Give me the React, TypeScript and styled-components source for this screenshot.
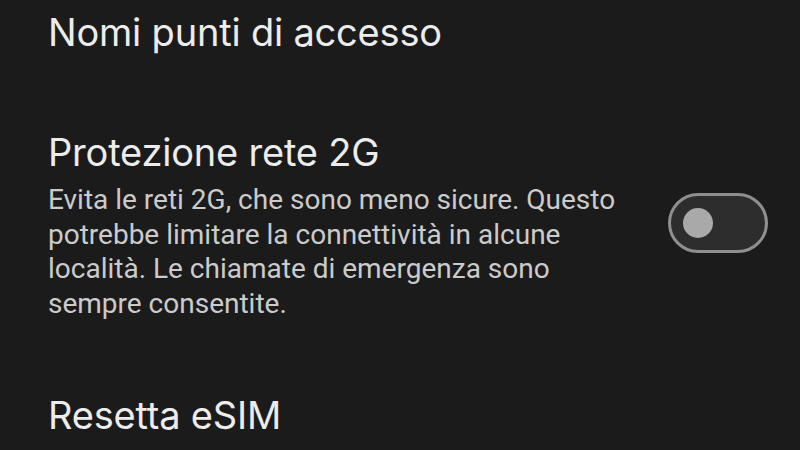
import React from 'react';
import styled, { createGlobalStyle } from 'styled-components';

const GlobalStyle = createGlobalStyle`
    html, body {
        margin: 0;
        padding: 0;
        background: #1b1b1b;
    }
`;

const Screen = styled.div`
    width: 800px;
    height: 450px;
    overflow: hidden;
    background: #1b1b1b;
    display: flex;
    flex-direction: column;
`;

const Item = styled.div<{ $pt: number }>`
    display: flex;
    align-items: center;
    gap: 40px;
    padding: ${props => props.$pt}px 32px 0 48px;
`;

const TextCol = styled.div`
    flex: 1;
    display: flex;
    flex-direction: column;
`;

const Title = styled.div`
    font-family: 'Inter', 'Open Sans', sans-serif;
    font-size: 38px;
    line-height: 48px;
    color: #ececec;
    letter-spacing: -0.2px;
`;

const Summary = styled.div`
    font-family: 'Roboto', sans-serif;
    font-size: 28px;
    line-height: 34.5px;
    color: #cbcbcb;
    margin-top: 7px;
    max-width: 585px;
`;

const Switch = styled.div<{ $on: boolean }>`
    width: 100px;
    height: 60px;
    box-sizing: border-box;
    border-radius: 30px;
    border: 3px solid #8f8f8f;
    background: #2d2d2d;
    display: flex;
    align-items: center;
    justify-content: ${props => (props.$on ? 'flex-end' : 'flex-start')};
    padding: 0 12px;
    flex-shrink: 0;
    margin-bottom: 3px;
`;

const Knob = styled.div`
    width: 30px;
    height: 30px;
    border-radius: 50%;
    background: #a9a9a9;
`;

const App = () => {
    return (
        <Screen>
            <GlobalStyle />
            <Item $pt={8}>
                <TextCol>
                    <Title>Nomi punti di accesso</Title>
                </TextCol>
            </Item>
            <Item $pt={72}>
                <TextCol>
                    <Title>Protezione rete 2G</Title>
                    <Summary>
                        Evita le reti 2G, che sono meno sicure. Questo potrebbe limitare la connettività in alcune
                        località. Le chiamate di emergenza sono sempre consentite.
                    </Summary>
                </TextCol>
                <Switch $on={false}>
                    <Knob />
                </Switch>
            </Item>
            <Item $pt={70}>
                <TextCol>
                    <Title>Resetta eSIM</Title>
                </TextCol>
            </Item>
        </Screen>
    );
};

export default App;
